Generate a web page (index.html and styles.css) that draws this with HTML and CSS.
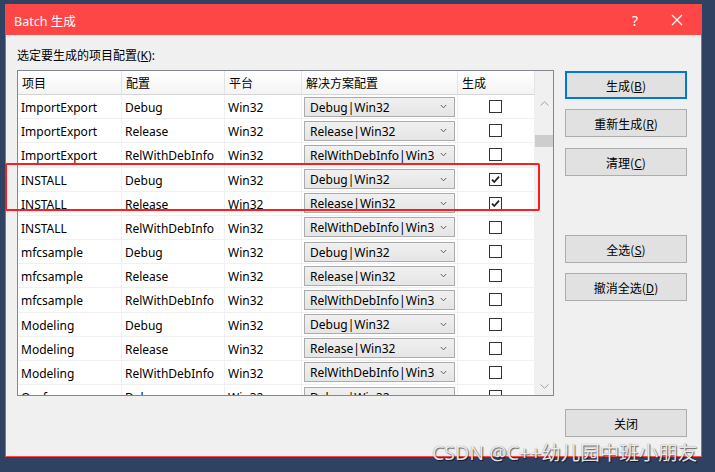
FILE: index.html
```html
<!DOCTYPE html>
<html>
<head>
<meta charset="utf-8">
<link rel="stylesheet" href="styles.css">
</head>
<body>
<div class="dialog">
  <div class="titlebar">
    <span class="title">Batch 生成</span>
    <span class="tb-help">?</span>
    <span class="tb-close"><svg width="12" height="12" viewBox="0 0 12 12"><path d="M1 1L11 11M11 1L1 11" stroke="#fff" stroke-width="1.2" fill="none"/></svg></span>
  </div>
  <div class="content">
    <div class="left">
      <div class="label">选定要生成的项目配置(<u>K</u>):</div>
      <div class="table">
        <div class="grid-area">
          <div class="row head">
            <div class="hcell">项目</div>
            <div class="hcell">配置</div>
            <div class="hcell">平台</div>
            <div class="hcell">解决方案配置</div>
            <div class="hcell">生成</div>
          </div>
          <div class="rows" id="rows"></div>
        </div>
        <div class="vscroll">
          <div class="arrow"><svg width="9" height="5" viewBox="0 0 9 5"><path d="M0.5 4.5L4.5 0.8L8.5 4.5" stroke="#a0a0a0" fill="none"/></svg></div>
          <div class="track"><div class="thumb"></div></div>
          <div class="arrow"><svg width="9" height="5" viewBox="0 0 9 5"><path d="M0.5 0.5L4.5 4.2L8.5 0.5" stroke="#a0a0a0" fill="none"/></svg></div>
        </div>
      </div>
    </div>
    <div class="buttons">
      <div class="btn default g0">生成(<u>B</u>)</div>
      <div class="btn g1">重新生成(<u>R</u>)</div>
      <div class="btn g2">清理(<u>C</u>)</div>
      <div class="btn g3">全选(<u>S</u>)</div>
      <div class="btn g1">撤消全选(<u>D</u>)</div>
      <div class="btn g4">关闭</div>
    </div>
    <div class="highlight"></div>
  </div>
</div>
<div class="watermark">CSDN @C++幼儿园中班小朋友</div>
<script src="app.js"></script>
</body>
</html>
```
FILE: app.js
```js
var data = [
  ["ImportExport","Debug","Win32","Debug|Win32",false],
  ["ImportExport","Release","Win32","Release|Win32",false],
  ["ImportExport","RelWithDebInfo","Win32","RelWithDebInfo|Win3",false],
  ["INSTALL","Debug","Win32","Debug|Win32",true],
  ["INSTALL","Release","Win32","Release|Win32",true],
  ["INSTALL","RelWithDebInfo","Win32","RelWithDebInfo|Win3",false],
  ["mfcsample","Debug","Win32","Debug|Win32",false],
  ["mfcsample","Release","Win32","Release|Win32",false],
  ["mfcsample","RelWithDebInfo","Win32","RelWithDebInfo|Win3",false],
  ["Modeling","Debug","Win32","Debug|Win32",false],
  ["Modeling","Release","Win32","Release|Win32",false],
  ["Modeling","RelWithDebInfo","Win32","RelWithDebInfo|Win3",false],
  ["Ocaf","Debug","Win32","Debug|Win32",false]
];
var chev = '<svg width="7" height="5" viewBox="0 0 7 5"><path d="M0.8 1L3.5 3.8L6.2 1" stroke="#606060" stroke-width="1" fill="none"/></svg>';
var tick = '<svg width="11" height="11" viewBox="0 0 11 11"><path d="M2 5.6L4.3 8L9 2.6" stroke="#222" stroke-width="1.8" fill="none"/></svg>';
var html = "";
data.forEach(function (r) {
  html += '<div class="row">' +
    '<div class="cell txt">' + r[0] + '</div>' +
    '<div class="cell txt">' + r[1] + '</div>' +
    '<div class="cell txt">' + r[2] + '</div>' +
    '<div class="cell combo-cell"><div class="combo"><span class="ctext">' + r[3] + '</span><span class="chev">' + chev + '</span></div></div>' +
    '<div class="cell check-cell"><div class="check">' + (r[4] ? tick : '') + '</div></div>' +
    '</div>';
});
document.getElementById("rows").innerHTML = html;
```
FILE: styles.css
```css
html, body { margin: 0; padding: 0; }
body {
  background: #2f4262;
  width: 715px;
  height: 472px;
  overflow: hidden;
  position: relative;
  font-family: "Noto Sans", "Noto Sans CJK SC", sans-serif;
  font-size: 12px;
  color: #000;
}
.dialog {
  margin: 4px 0 0 5px;
  width: 695px;
  height: 451px;
  border: 1px solid #ff4646;
  background: #f0f0f0;
  display: flex;
  flex-direction: column;
}
.titlebar {
  height: 30px;
  background: #ff4646;
  display: flex;
  align-items: center;
  color: #fff;
  flex-shrink: 0;
}
.title { margin-left: 8px; font-size: 12.5px; }
.tb-help { margin-left: auto; font-size: 14px; margin-right: 33px; }
.tb-close { margin-right: 18px; display: flex; }
.content {
  flex: 1;
  display: flex;
  position: relative;
  padding-left: 11px;
}
.left { display: flex; flex-direction: column; }
.label { height: 35px; line-height: 16px; padding-top: 13px; box-sizing: border-box; }
.table {
  width: 535px;
  height: 324px;
  border: 1px solid #828790;
  background: #fff;
  display: flex;
  overflow: hidden;
}
.grid-area { width: 517px; overflow: hidden; }
.row {
  display: grid;
  grid-template-columns: 104px 103px 77px 156px 77px;
  height: 24.18px;
}
.row.head { height: 24px; }
.hcell {
  background: linear-gradient(#ffffff, #f4f4f4);
  border-right: 1px solid #e3e3e3;
  border-bottom: 1px solid #d5d5d5;
  padding-left: 4px;
  display: flex;
  align-items: center;
  box-sizing: border-box;
}
.cell {
  border-right: 1px solid #f0f0f0;
  border-bottom: 1px solid #f0f0f0;
  padding-left: 3px;
  display: flex;
  align-items: center;
  box-sizing: border-box;
  white-space: nowrap;
  overflow: hidden;
}
.cell.txt { padding-top: 2px; }
.combo-cell { padding-left: 2px; }
.combo {
  width: 151px;
  height: 20px;
  box-sizing: border-box;
  border: 1px solid #acacac;
  background: linear-gradient(#f0f0f0, #e5e5e5);
  display: flex;
  align-items: center;
  padding-left: 5px;
}
.ctext { white-space: nowrap; padding-top: 1px; }
.chev { margin-left: auto; margin-right: 7px; display: flex; }
.check-cell { justify-content: center; padding-left: 0; padding-right: 1px; }
.check {
  width: 13px;
  height: 13px;
  box-sizing: border-box;
  border: 1px solid #333;
  background: #fff;
  display: flex;
  align-items: center;
  justify-content: center;
}
.vscroll {
  width: 18px;
  background: #f0f0f0;
  display: flex;
  flex-direction: column;
  align-items: center;
}
.arrow { height: 17px; display: flex; align-items: center; justify-content: center; width: 100%; }
.vscroll .arrow:first-child { margin-top: 24px; }
.track { flex: 1; width: 100%; }
.thumb { margin-top: 23px; height: 12px; background: #cdcdcd; width: 100%; }
.buttons {
  margin-left: 11px;
  padding-top: 36px;
  display: flex;
  flex-direction: column;
  width: 122px;
}
.btn {
  height: 28px;
  box-sizing: border-box;
  border: 1px solid #adadad;
  background: #e1e1e1;
  display: flex;
  align-items: center;
  justify-content: center;
  font-family: "Noto Sans CJK SC", "Noto Sans", sans-serif;
}
.btn.default { border: 2px solid #0078d7; }
.g1 { margin-top: 10px; }
.g2 { margin-top: 11px; }
.g3 { margin-top: 59px; }
.g4 { margin-top: 108px; }
.highlight {
  position: absolute;
  left: -1px;
  top: 128px;
  width: 531px;
  height: 44px;
  border: 2.5px solid #ff1c1c;
  border-radius: 2px;
  pointer-events: none;
}
.watermark {
  position: absolute;
  left: 432px;
  top: 440px;
  font-size: 19.5px;
  line-height: 26px;
  color: rgba(245, 245, 245, 0.92);
  text-shadow: 1px 1px 1px rgba(0,0,0,0.55), 0 0 1px rgba(0,0,0,0.4);
  white-space: nowrap;
}
```
